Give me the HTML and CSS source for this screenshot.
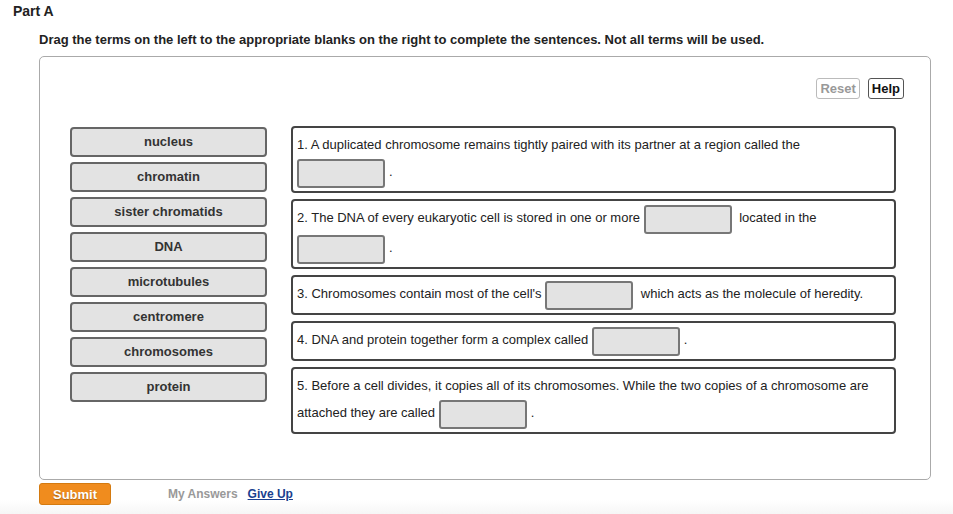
FILE: index.html
```html
<!DOCTYPE html>
<html lang="en">
<head>
    <meta charset="UTF-8">
    <title>Part A</title>
    <link rel="stylesheet" href="styles.css">
</head>
<body>
    <div class="part">
        <h2 class="part-title">Part A</h2>
        <p class="instructions">Drag the terms on the left to the appropriate blanks on the right to complete the sentences. Not all terms will be used.</p>

        <!-- Drag and drop area -->
        <div class="question-box">
            <div class="toolbar">
                <button class="tool-btn reset-btn">Reset</button>
                <button class="tool-btn help-btn">Help</button>
            </div>
            <div class="dnd">
                <div class="terms">
                    <div class="term">nucleus</div>
                    <div class="term">chromatin</div>
                    <div class="term">sister chromatids</div>
                    <div class="term">DNA</div>
                    <div class="term">microtubules</div>
                    <div class="term">centromere</div>
                    <div class="term">chromosomes</div>
                    <div class="term">protein</div>
                </div>
                <div class="sentences">
                    <div class="sentence">1. A duplicated chromosome remains tightly paired with its partner at a region called the <span class="blank"></span>.</div>
                    <div class="sentence">2. The DNA of every eukaryotic cell is stored in one or more <span class="blank"></span> located in the <span class="blank"></span>.</div>
                    <div class="sentence">3. Chromosomes contain most of the cell's <span class="blank"></span> which acts as the molecule of heredity.</div>
                    <div class="sentence">4. DNA and protein together form a complex called <span class="blank"></span>.</div>
                    <div class="sentence">5. Before a cell divides, it copies all of its chromosomes. While the two copies of a chromosome are attached they are called <span class="blank"></span>.</div>
                </div>
            </div>
        </div>

        <div class="actions">
            <button class="submit-btn">Submit</button>
            <span class="my-answers">My Answers</span>
            <a href="#" class="give-up">Give Up</a>
        </div>
    </div>
</body>
</html>
```

FILE: styles.css
```css
* {
    margin: 0;
    padding: 0;
    box-sizing: border-box;
}

body {
    font-family: 'Liberation Sans', Arial, sans-serif;
    background: linear-gradient(#fff 0, #fff 500px, #f6f6f6 514px);
    color: #222;
    height: 514px;
    overflow: hidden;
}

.part {
    padding: 3px 22px 0 13px;
}

.part-title {
    font-size: 14px;
    font-weight: bold;
    color: #222;
    line-height: 17px;
}

.instructions {
    font-size: 13px;
    font-weight: bold;
    color: #222;
    margin: 12px 0 0 26px;
    line-height: 15px;
}

/* Question box */
.question-box {
    margin: 9px 0 0 26px;
    border: 1px solid #aaa;
    border-radius: 5px;
    height: 424px;
    padding: 21px 26px 0 30px;
}

.toolbar {
    display: flex;
    justify-content: flex-end;
    gap: 8px;
}

.tool-btn {
    font-family: 'Liberation Sans', Arial, sans-serif;
    font-size: 13px;
    font-weight: bold;
    background: #fff;
    border: 1px solid #555;
    border-radius: 3px;
    height: 21px;
    padding: 0 3px;
}

.reset-btn {
    color: #999;
    border-color: #bbb;
}

.help-btn {
    color: #111;
}

.dnd {
    display: flex;
    gap: 24px;
    margin-top: 27px;
}

.terms {
    width: 197px;
    display: flex;
    flex-direction: column;
    gap: 5px;
    padding-top: 1px;
}

.term {
    height: 30px;
    line-height: 26px;
    background: #e3e3e3;
    border: 2px solid #666;
    border-radius: 4px;
    text-align: center;
    font-size: 13px;
    font-weight: bold;
    color: #333;
}

.sentences {
    width: 605px;
    display: flex;
    flex-direction: column;
    gap: 6px;
}

.sentence {
    border: 2px solid #444;
    border-radius: 4px;
    padding: 3px 4px;
    font-size: 13px;
    line-height: 27px;
    color: #222;
}

.blank {
    display: inline-block;
    width: 88px;
    height: 29px;
    background: #e3e3e3;
    border: 2px solid #777;
    border-radius: 3px;
    vertical-align: middle;
    margin: 1px 4px 0 0;
}

/* Bottom actions */
.actions {
    display: flex;
    align-items: center;
    margin: 3px 0 0 26px;
}

.submit-btn {
    font-family: 'Liberation Sans', Arial, sans-serif;
    width: 72px;
    height: 22px;
    background: #f08c1e;
    border: 1px solid #d47a10;
    border-radius: 3px;
    color: #fff;
    font-size: 13px;
    font-weight: bold;
    text-shadow: 0 1px 1px rgba(0,0,0,0.3);
}

.my-answers {
    margin-left: 57px;
    font-size: 12px;
    font-weight: bold;
    color: #999;
}

.give-up {
    margin-left: 10px;
    font-size: 12px;
    font-weight: bold;
    color: #1a3f8f;
}
```
